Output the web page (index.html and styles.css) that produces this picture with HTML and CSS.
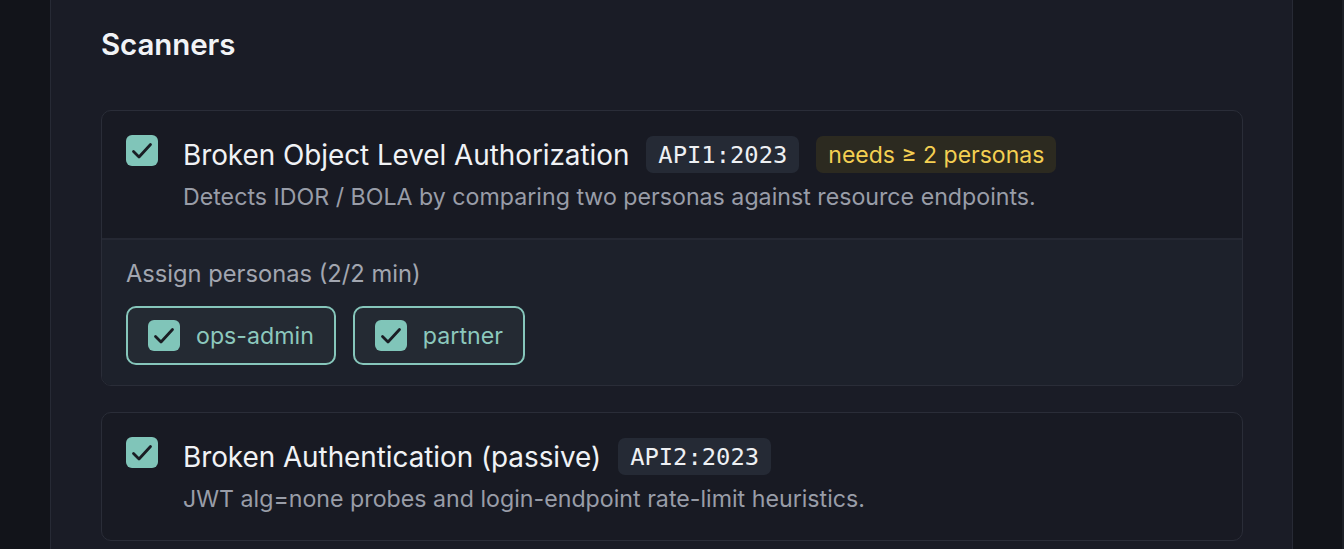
FILE: index.html
```html
<!DOCTYPE html>
<html lang="en">
<head>
<meta charset="utf-8">
<title>Scanners</title>
<link rel="stylesheet" href="styles.css">
</head>
<body>
<div class="shell">
  <div class="gutter"></div>
  <main class="panel">
    <h2 class="heading">Scanners</h2>

    <section class="card">
      <div class="card-head">
        <span class="check"><svg viewBox="0 0 32 32"><polyline points="7.5,16.5 13,22 24.5,9.5"/></svg></span>
        <div class="card-body">
          <div class="title-row">
            <span class="title">Broken Object Level Authorization</span>
            <span class="code">API1:2023</span>
            <span class="warn">needs ≥ 2 personas</span>
          </div>
          <p class="desc">Detects IDOR / BOLA by comparing two personas against resource endpoints.</p>
        </div>
      </div>
      <div class="personas">
        <div class="label">Assign personas (2/2 min)</div>
        <div class="chips">
          <label class="chip"><span class="check"><svg viewBox="0 0 32 32"><polyline points="7.5,16.5 13,22 24.5,9.5"/></svg></span><span>ops-admin</span></label>
          <label class="chip"><span class="check"><svg viewBox="0 0 32 32"><polyline points="7.5,16.5 13,22 24.5,9.5"/></svg></span><span>partner</span></label>
        </div>
      </div>
    </section>

    <section class="card">
      <div class="card-head">
        <span class="check"><svg viewBox="0 0 32 32"><polyline points="7.5,16.5 13,22 24.5,9.5"/></svg></span>
        <div class="card-body">
          <div class="title-row">
            <span class="title">Broken Authentication (passive)</span>
            <span class="code">API2:2023</span>
          </div>
          <p class="desc">JWT alg=none probes and login-endpoint rate-limit heuristics.</p>
        </div>
      </div>
    </section>
  </main>
  <div class="gutter right"></div>
</div>
</body>
</html>
```

FILE: styles.css
```css
* { box-sizing: border-box; }
html, body {
  margin: 0;
  height: 100%;
  background: #12141a;
  font-family: Inter, "Noto Sans", sans-serif;
  overflow: hidden;
}
.shell {
  display: flex;
  height: 549px;
}
.gutter {
  width: 50px;
  flex: none;
  background: #12141a;
}
.gutter.right {
  width: 51px;
  border-right: 2px solid #1c1f26;
}
.panel {
  width: 1243px;
  flex: none;
  background: #1a1c26;
  border-left: 1px solid #272a35;
  border-right: 1px solid #272a35;
  padding: 26px 49px 0 50px;
}
.heading {
  margin: 0 0 47px 0;
  font-size: 29.5px;
  line-height: 37px;
  font-weight: 600;
  color: #f1f3f6;
  letter-spacing: -0.1px;
}
.card {
  border: 1px solid #2a2d38;
  border-radius: 10px;
  background: #181a23;
  margin-bottom: 26px;
  overflow: hidden;
}
.card-head {
  display: flex;
  align-items: flex-start;
  gap: 25px;
  padding: 24px 24px 26px 24px;
}
.check {
  width: 32px;
  height: 31px;
  flex: none;
  border-radius: 6px;
  background: #80c5b9;
  display: inline-flex;
  align-items: center;
  justify-content: center;
}
.check svg {
  width: 32px;
  height: 32px;
  fill: none;
  stroke: #1a1d24;
  stroke-width: 2.8;
  stroke-linecap: round;
  stroke-linejoin: round;
}
.card-body { flex: 1; }
.title-row {
  display: flex;
  align-items: center;
  gap: 17px;
  height: 37px;
  margin-top: 1px;
}
.title {
  font-size: 27.9px;
  color: #f0f2f5;
  font-weight: 400;
  letter-spacing: -0.05px;
}
.code {
  font-family: "DejaVu Sans Mono", "Liberation Mono", monospace;
  font-size: 23.8px;
  color: #eef0f3;
  background: #252a35;
  border-radius: 7px;
  height: 37px;
  padding: 0 12px;
  display: inline-flex;
  align-items: center;
}
.warn {
  font-size: 23px;
  color: #f4cf52;
  background: #2c2a20;
  border-radius: 7px;
  height: 37px;
  padding: 0 12px;
  display: inline-flex;
  align-items: center;
}
.desc {
  margin: 9px 0 0 0;
  font-size: 23.2px;
  line-height: 30px;
  color: #999da8;
}
.personas {
  border-top: 2px solid #252833;
  background: #1d212b;
  padding: 19px 24px 20px 24px;
}
.label {
  font-size: 23.7px;
  line-height: 30px;
  color: #a2a6b0;
}
.chips {
  display: flex;
  gap: 17px;
  margin-top: 17px;
}
.chip {
  display: inline-flex;
  align-items: center;
  gap: 16px;
  height: 59px;
  padding: 0 20px;
  border: 2px solid #86c6bb;
  border-radius: 10px;
  background: #242a33;
  font-size: 23.2px;
  color: #8cc8bd;
}
```
